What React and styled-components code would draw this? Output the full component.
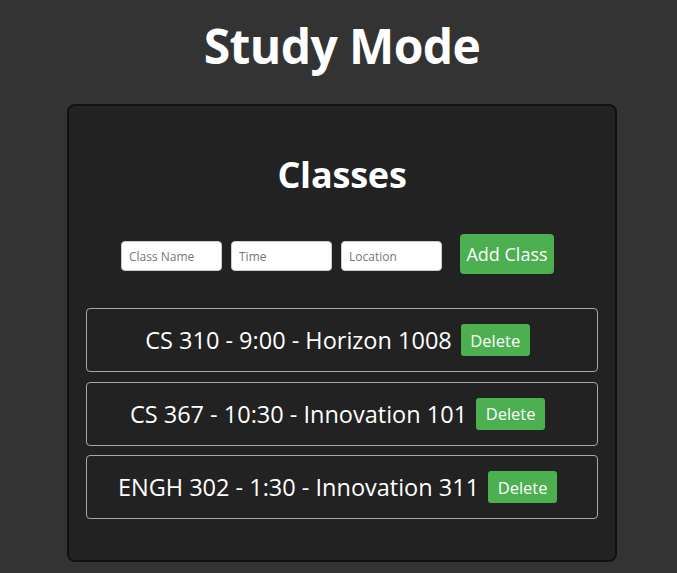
import React from "react";
import styled, { createGlobalStyle } from "styled-components";

const Global = createGlobalStyle`
  html, body { margin: 0; padding: 0; background: #333333; }
  body { font-family: "Open Sans", "Noto Sans", sans-serif; color: #fff; }
  * { box-sizing: border-box; }
`;

const Page = styled.div`
  display: flex;
  flex-direction: column;
  align-items: center;
  padding-left: 7px;
  min-height: 573px;
`;

const Title = styled.h1`
  margin: 15px 0 0;
  font-family: "Open Sans", sans-serif;
  font-weight: 700;
  font-size: 48px;
  line-height: 62px;
  color: #fff;
  letter-spacing: -0.6px;
`;

const Card = styled.div`
  margin-top: 27px;
  width: 550px;
  background: #222222;
  border: 2px solid #111;
  border-radius: 8px;
  padding: 48px 17px 41px;
  display: flex;
  flex-direction: column;
  align-items: center;
`;

const Heading = styled.h2`
  margin: 0;
  font-family: "Open Sans", sans-serif;
  font-weight: 700;
  font-size: 36px;
  line-height: 41px;
  color: #fff;
  letter-spacing: -0.2px;
`;

const Form = styled.div`
  margin-top: 39px;
  display: flex;
  align-items: center;
  gap: 9px;
  padding-right: 9px;
`;

const Input = styled.input`
  width: 101px;
  height: 30px;
  margin-top: 4px;
  border: 1px solid #ccc;
  border-radius: 4px;
  background: #fff;
  padding: 0 7px;
  font-family: "Open Sans", sans-serif;
  font-size: 12px;
  outline: none;
  &::placeholder { color: #777; }
`;

const GreenButton = styled.button`
  background: #4caf50;
  color: #fff;
  border: none;
  border-radius: ${(p) => (p.$small ? "3px" : "4px")};
  font-family: "Open Sans", sans-serif;
  font-size: ${(p) => (p.$small ? "16.5px" : "18px")};
  width: ${(p) => (p.$small ? "69px" : "94px")};
  height: ${(p) => (p.$small ? "32px" : "40px")};
  padding: 0;
  cursor: pointer;
`;

const AddButton = styled(GreenButton)`
  margin-left: 9px;
`;

const List = styled.ul`
  list-style: none;
  margin: 34px 0 0;
  padding: 0;
  width: 100%;
  display: flex;
  flex-direction: column;
  gap: 9.5px;
`;

const Item = styled.li`
  height: 64px;
  border: 1px solid #a8a8a8;
  border-radius: 4px;
  display: flex;
  align-items: center;
  justify-content: center;
`;

const ItemText = styled.span`
  font-family: "Open Sans", sans-serif;
  font-size: 23.5px;
  color: #fff;
`;

const DeleteButton = styled(GreenButton)`
  margin: 0 9px;
`;

const classes = [
  "CS 310 - 9:00 - Horizon 1008",
  "CS 367 - 10:30 - Innovation 101",
  "ENGH 302 - 1:30 - Innovation 311",
];

export default function App() {
  return (
    <>
      <Global />
      <Page>
        <Title>Study Mode</Title>
        <Card>
          <Heading>Classes</Heading>
          <Form>
            <Input placeholder="Class Name" />
            <Input placeholder="Time" />
            <Input placeholder="Location" />
            <AddButton>Add Class</AddButton>
          </Form>
          <List>
            {classes.map((c) => (
              <Item key={c}>
                <ItemText>{c}</ItemText>
                <DeleteButton $small>Delete</DeleteButton>
              </Item>
            ))}
          </List>
        </Card>
      </Page>
    </>
  );
}
